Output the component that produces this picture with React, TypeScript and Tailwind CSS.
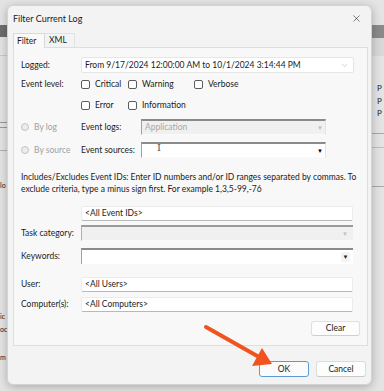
import React from "react";
import { X, ChevronDown } from "lucide-react";

const font = { fontFamily: 'Lato, "Noto Sans", sans-serif' };

const Check = ({ label }: { label: string }) => (
  <div className="flex items-center gap-[5px]">
    <div className="w-[9px] h-[9px] shrink-0 rounded-[2px] border border-[#5c5c5c] bg-white" />
    <span>{label}</span>
  </div>
);

const Radio = ({ label }: { label: string }) => (
  <div className="flex items-center gap-[5px] w-[60px] shrink-0 text-[#a0a0a0]">
    <div className="w-[8px] h-[8px] rounded-full border border-[#c4c4c4] bg-[#ececec]" />
    <span>{label}</span>
  </div>
);

const TextBox = ({ value, className = "" }: { value?: string; className?: string }) => (
  <div
    className={`h-[15px] bg-white border border-[#ececec] border-b-[#b8b8b8] rounded-[2px] flex items-center pl-[3px] ${className}`}
  >
    {value}
  </div>
);

const Sunken = ({ disabled, value, children }: { disabled?: boolean; value?: string; children?: React.ReactNode }) => (
  <div
    className={`h-[16px] flex items-center border-t-[2px] border-l border-r border-b border-t-[#8a8a8a] border-l-[#a0a0a0] border-r-[#e4e4e4] border-b-[#fafafa] pl-[3px] pr-[2px] relative ${
      disabled ? "bg-[#f0f0f0] text-[#a8a8a8]" : "bg-white"
    }`}
  >
    <span className="flex-1">{value}</span>
    {children}
    <span className={`text-[6px] leading-none ${disabled ? "text-[#bdbdbd]" : "text-black"}`}>▼</span>
  </div>
);

export default function App() {
  return (
    <div className="relative w-[384px] h-[391px] overflow-hidden bg-[#e4e4e4] text-[8.5px] text-[#1b1b1b]" style={font}>
      {/* background window fragments */}
      <div className="absolute left-0 top-[25px] w-[8px] h-[12px] bg-[#6e6e6e]" />
      <div className="absolute left-0 top-[55px] w-[8px] h-[1px] bg-[#c8c8c8]" />
      <div className="absolute left-0 top-[122px] w-[8px] h-[1px] bg-[#9a9a9a]" />
      <div className="absolute left-0 top-[127px] w-[8px] h-[1px] bg-[#9a9a9a]" />
      <div className="absolute left-0 top-[150px] w-[8px] h-[1px] bg-[#b0b0b0]" />
      <div className="absolute left-0 top-[180px] text-[7px]">lo</div>
      <div className="absolute left-0 top-[311px] text-[7px]">ic</div>
      <div className="absolute left-0 top-[324px] text-[7px]">oc</div>
      <div className="absolute left-0 top-[352px] text-[7px]">m</div>
      <div className="absolute right-0 top-[25px] w-[12px] h-[13px] bg-[#8a8a8a]" />
      <div className="absolute right-0 top-[38px] w-[12px] h-[18px] bg-[#d8d8d8]" />
      <div className="absolute left-[377px] top-[82px] text-[8px] leading-[12.5px]">
        P<br />P<br />P
      </div>
      <div className="absolute right-0 top-[133px] w-[12px] h-[1px] bg-[#a8a8a8]" />
      <div className="absolute right-0 top-[147px] w-[12px] h-[1px] bg-[#c0c0c0]" />
      <div className="absolute right-0 top-[186px] w-[12px] h-[1px] bg-[#a8a8a8]" />

      {/* dialog window */}
      <div className="absolute left-[7px] top-[5px] w-[365px] h-[380px] bg-[#f3f3f3] rounded-[6px] border border-[#d4d4d4] shadow-[0_2px_10px_rgba(0,0,0,0.25)] flex flex-col">
        <div className="h-[24px] flex items-center justify-between pl-[5px] pr-[9px]">
          <span className="mt-[1px] text-[9px]">Filter Current Log</span>
          <X size={11} strokeWidth={1.2} className="mt-[1px]" />
        </div>

        {/* tabs */}
        <div className="flex items-end h-[16px] ml-[5px] mt-[1px]">
          <div className="h-[15px] w-[32px] bg-[#f9f9f9] border border-b-0 border-[#d9d9d9] flex items-center pl-[3px] relative top-[1px] z-10">
            Filter
          </div>
          <div className="h-[14px] w-[30px] border-r border-t border-[#e2e2e2] flex items-center pl-[4px]">XML</div>
        </div>

        {/* panel */}
        <div className="ml-[5px] w-[355px] h-[299px] border border-[#dedede] bg-[#f8f8f8] pl-[7px] pr-[14px] flex flex-col">
          <div className="flex items-center mt-[9px]">
            <span className="w-[60px] shrink-0">Logged:</span>
            <div className="flex-1 h-[16px] bg-white border border-[#e6e6e6] rounded-[2px] flex items-center pl-[3px] pr-[4px] -mr-[1px]">
              <span className="flex-1">From 9/17/2024 12:00:00 AM to 10/1/2024 3:14:44 PM</span>
              <ChevronDown size={9} strokeWidth={1} className="text-[#8a8a8a]" />
            </div>
          </div>

          <div className="flex mt-[4px]">
            <span className="w-[60px] shrink-0 leading-[14px]">Event level:</span>
            <div className="flex flex-col gap-[7px]">
              <div className="flex items-center h-[14px]">
                <div className="w-[47px] shrink-0"><Check label="Critical" /></div>
                <div className="w-[66px] shrink-0"><Check label="Warning" /></div>
                <Check label="Verbose" />
              </div>
              <div className="flex items-center h-[14px]">
                <div className="w-[47px] shrink-0"><Check label="Error" /></div>
                <Check label="Information" />
              </div>
            </div>
          </div>

          <div className="flex items-center mt-[7px]">
            <Radio label="By log" />
            <span className="w-[60px] shrink-0">Event logs:</span>
            <div className="w-[185px]"><Sunken disabled value="Application" /></div>
          </div>

          <div className="flex items-center mt-[7px]">
            <Radio label="By source" />
            <span className="w-[60px] shrink-0">Event sources:</span>
            <div className="w-[185px]">
              <Sunken>
                <span className="absolute left-[15px] top-[-1px] text-[10px] leading-none text-[#555]" style={{ fontFamily: '"DejaVu Serif", serif' }}>I</span>
              </Sunken>
            </div>
          </div>

          <p className="mt-[13px] leading-[12px] -mr-[12px]">
            Includes/Excludes Event IDs: Enter ID numbers and/or ID ranges separated by commas. To exclude criteria, type a minus sign first. For example 1,3,5-99,-76
          </p>

          <div className="flex mt-[11px]">
            <span className="w-[60px] shrink-0" />
            <TextBox value="<All Event IDs>" className="flex-1" />
          </div>

          <div className="flex items-center mt-[4px]">
            <span className="w-[60px] shrink-0">Task category:</span>
            <div className="flex-1 h-[16px] bg-[#f0f0f0] border-t-[2px] border-l border-t-[#9a9a9a] border-l-[#b0b0b0] border-b border-b-[#fafafa] flex items-center justify-end pr-[5px]">
              <span className="text-[6px] leading-none text-[#c0c0c0]">▼</span>
            </div>
          </div>

          <div className="flex items-center mt-[7px]">
            <span className="w-[60px] shrink-0">Keywords:</span>
            <div className="flex-1 h-[16px] bg-white border-t-[2px] border-l border-t-[#8a8a8a] border-l-[#a0a0a0] flex items-center justify-end pr-[3px]">
              <span className="w-[9px] h-[10px] bg-[#f4f4f4] rounded-[2px] flex items-center justify-center text-[6px] leading-none">▼</span>
            </div>
          </div>

          <div className="flex items-center mt-[13px]">
            <span className="w-[60px] shrink-0">User:</span>
            <TextBox value="<All Users>" className="flex-1" />
          </div>

          <div className="flex items-center mt-[5px]">
            <span className="w-[60px] shrink-0">Computer(s):</span>
            <TextBox value="<All Computers>" className="flex-1" />
          </div>

          <div className="flex justify-end mt-[9px] -mr-[7px]">
            <button className="w-[49px] h-[15px] bg-[#fdfdfd] border border-[#e0e0e0] border-b-[#cfcfcf] rounded-[3px] text-[8.5px]">Clear</button>
          </div>
        </div>

        {/* footer */}
        <div className="flex justify-end gap-[7px] pr-[5px] mt-[15px]">
          <button className="w-[50px] h-[16px] bg-[#fbfbfb] border border-[#5b9bd5] rounded-[3px] text-[8.5px]">OK</button>
          <button className="w-[50px] h-[16px] bg-[#fdfdfd] border border-[#dcdcdc] border-b-[#c8c8c8] rounded-[3px] text-[8.5px]">Cancel</button>
        </div>
      </div>

      {/* annotation arrow */}
      <svg className="absolute left-0 top-0 pointer-events-none" width="384" height="391">
        <line x1="206" y1="327" x2="259" y2="357" stroke="#f0531f" strokeWidth="4" strokeLinecap="round" />
        <polygon points="272,364 252,366 262,348" fill="#f0531f" />
      </svg>
    </div>
  );
}
